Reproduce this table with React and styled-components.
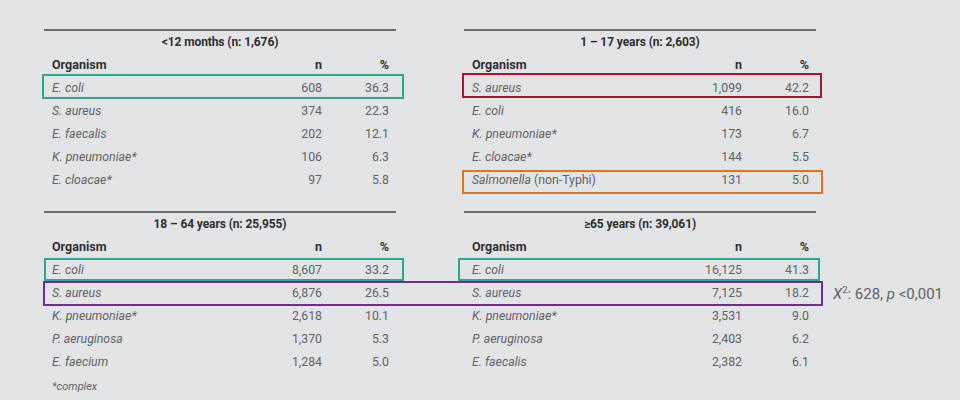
import React from "react";
import styled, { createGlobalStyle } from "styled-components";

const Global = createGlobalStyle`
  html, body { margin: 0; padding: 0; background: #e3e4e6; }
  body { font-family: Roboto, "Noto Sans", "Liberation Sans", sans-serif; }
`;

const Page = styled.div`
  width: 960px;
  height: 400px;
  box-sizing: border-box;
  padding: 29px 0 0 44px;
  display: flex;
  flex-direction: column;
  gap: 20px;
  overflow: hidden;
`;

const Section = styled.div`
  display: grid;
  grid-template-columns: 352px 352px;
  column-gap: 68px;
`;

const Table = styled.div`
  display: flex;
  flex-direction: column;
  border-top: 2px solid #6e6f71;
`;

const Title = styled.div`
  height: 22px;
  display: flex;
  align-items: center;
  justify-content: center;
  font-size: 12px;
  font-weight: 700;
  color: #2e2f31;
  letter-spacing: -0.1px;
`;

const Row = styled.div`
  position: relative;
  height: 23px;
  display: grid;
  grid-template-columns: 1fr 80px 67px;
  align-items: center;
  padding: 0 7px 0 8px;
  font-size: ${(p) => (p.$head ? "12.5px" : "12.3px")};
  color: ${(p) => (p.$head ? "#2e2f31" : "#616264")};
  font-weight: ${(p) => (p.$head ? 700 : 400)};
`;

const Name = styled.span`
  font-style: ${(p) => (p.$head ? "normal" : "italic")};
  white-space: nowrap;
`;

const Plain = styled.span`
  font-style: normal;
`;

const Num = styled.span`
  text-align: right;
`;

const Highlight = styled.div`
  position: absolute;
  top: ${(p) => p.$t}px;
  right: ${(p) => p.$r}px;
  bottom: ${(p) => p.$b}px;
  left: ${(p) => p.$l}px;
  border: 2px solid ${(p) => p.$color};
  pointer-events: none;
`;

const Stat = styled.div`
  position: absolute;
  left: calc(100% + 12px);
  top: 50%;
  transform: translateY(-50%);
  font-size: 15px;
  color: #616264;
  white-space: nowrap;
  sup {
    font-size: 9.5px;
    vertical-align: 6px;
    line-height: 0;
  }
`;

const Footnote = styled.div`
  padding: 7px 0 0 8px;
  font-size: 11px;
  font-style: italic;
  color: #616264;
`;

const COLORS = {
  teal: "#2fa592",
  red: "#a3182d",
  orange: "#e2741f",
  purple: "#6b2e90",
};

const tables = [
  {
    title: "<12 months (n: 1,676)",
    rows: [
      ["E. coli", "608", "36.3", { color: "teal", t: -2, r: -8, b: 0, l: -2 }],
      ["S. aureus", "374", "22.3"],
      ["E. faecalis", "202", "12.1"],
      ["K. pneumoniae*", "106", "6.3"],
      ["E. cloacae*", "97", "5.8"],
    ],
  },
  {
    title: "1 – 17 years (n: 2,603)",
    rows: [
      ["S. aureus", "1,099", "42.2", { color: "red", t: -3, r: -6, b: 1, l: -2 }],
      ["E. coli", "416", "16.0"],
      ["K. pneumoniae*", "173", "6.7"],
      ["E. cloacae*", "144", "5.5"],
      [
        <>
          Salmonella <Plain>(non-Typhi)</Plain>
        </>,
        "131",
        "5.0",
        { color: "orange", t: 2, r: -7, b: -3, l: -2 },
      ],
    ],
  },
  {
    title: "18 – 64 years (n: 25,955)",
    rows: [
      ["E. coli", "8,607", "33.2", { color: "teal", t: 0, r: -8, b: 0, l: 0 }],
      ["S. aureus", "6,876", "26.5", { color: "purple", t: 0, r: -427, b: -2, l: -1, stat: true }],
      ["K. pneumoniae*", "2,618", "10.1"],
      ["P. aeruginosa", "1,370", "5.3"],
      ["E. faecium", "1,284", "5.0"],
    ],
    foot: "*complex",
  },
  {
    title: "≥65 years (n: 39,061)",
    rows: [
      ["E. coli", "16,125", "41.3", { color: "teal", t: 0, r: -4, b: 0, l: -6 }],
      ["S. aureus", "7,125", "18.2"],
      ["K. pneumoniae*", "3,531", "9.0"],
      ["P. aeruginosa", "2,403", "6.2"],
      ["E. faecalis", "2,382", "6.1"],
    ],
  },
];

function DataTable({ data }) {
  return (
    <div>
      <Table>
        <Title>{data.title}</Title>
        <Row $head>
          <Name $head>Organism</Name>
          <Num>n</Num>
          <Num>%</Num>
        </Row>
        {data.rows.map(([name, n, pct, hl], i) => (
          <Row key={i}>
            <Name>{name}</Name>
            <Num>{n}</Num>
            <Num>{pct}</Num>
            {hl && (
              <Highlight $color={COLORS[hl.color]} $t={hl.t} $r={hl.r} $b={hl.b} $l={hl.l}>
                {hl.stat && (
                  <Stat>
                    <i>X</i>
                    <sup>2</sup>: 628, <i>p</i> &lt;0,001
                  </Stat>
                )}
              </Highlight>
            )}
          </Row>
        ))}
      </Table>
      {data.foot && <Footnote>{data.foot}</Footnote>}
    </div>
  );
}

export default function App() {
  return (
    <>
      <Global />
      <Page>
        <Section>
          <DataTable data={tables[0]} />
          <DataTable data={tables[1]} />
        </Section>
        <Section>
          <DataTable data={tables[2]} />
          <DataTable data={tables[3]} />
        </Section>
      </Page>
    </>
  );
}
